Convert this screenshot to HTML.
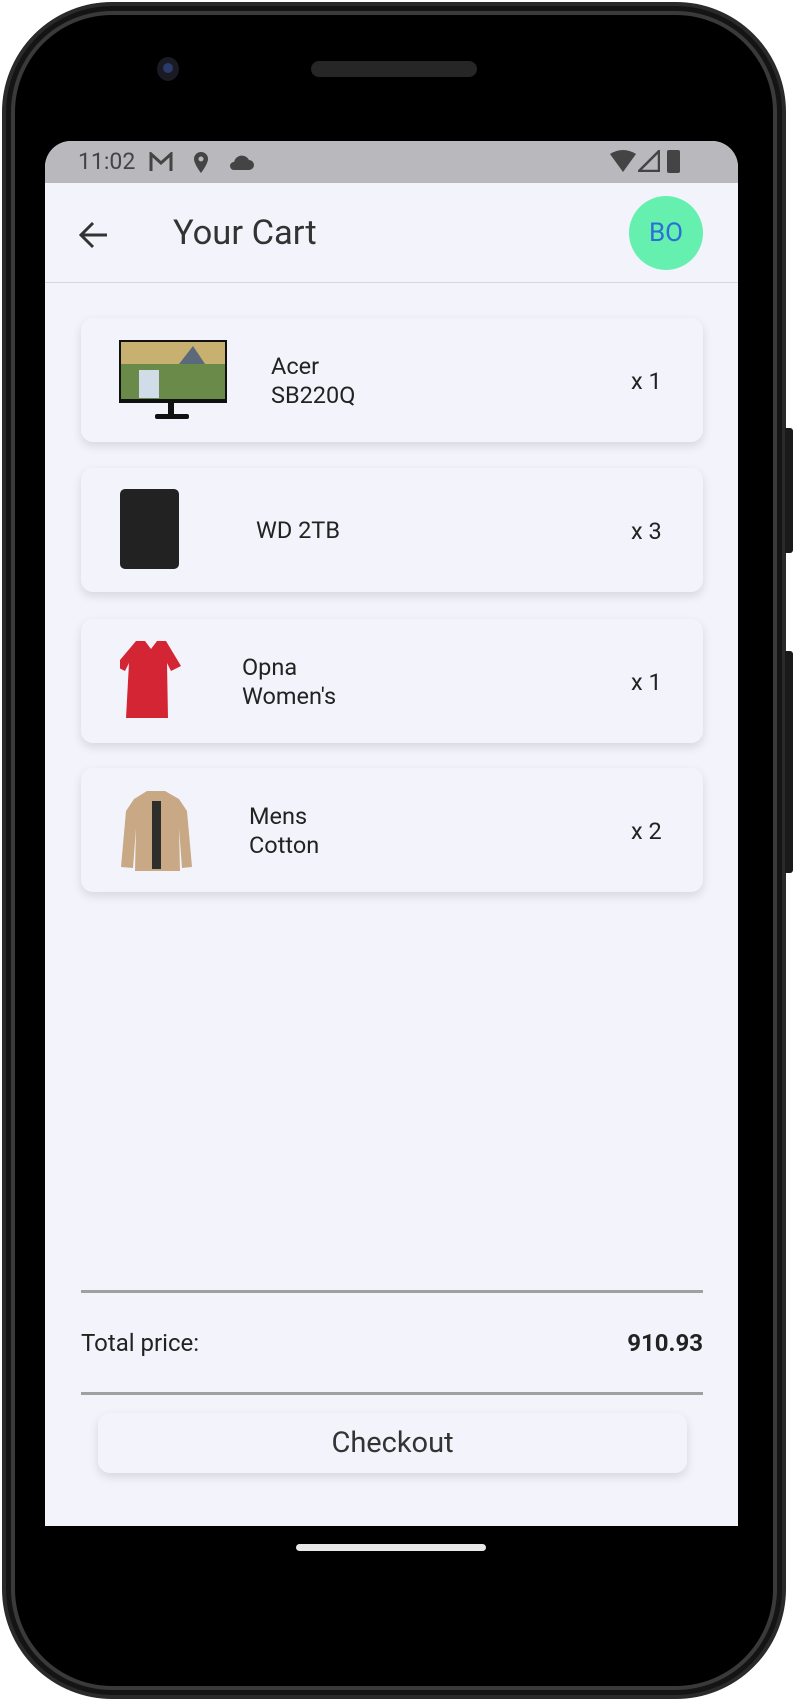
<!DOCTYPE html>
<html><head><meta charset="utf-8"><style>
*{margin:0;padding:0;box-sizing:border-box}
body{width:793px;height:1700px;background:#fff;position:relative;overflow:hidden;font-family:"Roboto","Liberation Sans",sans-serif;color:#222}
.phone{position:absolute;left:2px;top:2px;width:784px;height:1697px;background:#000;border-radius:110px;border:4px solid #2a2a2a;box-shadow:inset 0 0 0 5px #141414, inset 0 0 0 9px #3a3a3a, inset 0 0 0 14px #000}
.btn{position:absolute;left:785px;width:8px;background:#1a1a1a;border-radius:0 3px 3px 0}
.screen{position:absolute;left:45px;top:141px;width:693px;height:1385px;background:#f3f4fb;border-radius:26px 26px 0 0;overflow:hidden}
.status{position:absolute;left:0;top:0;width:100%;height:42px;background:#b8b8bd}
.abs{position:absolute}
.card{position:absolute;left:36px;width:622px;height:124px;background:#f3f4fb;border-radius:12px;box-shadow:0 4px 10px rgba(0,0,0,.12)}
.name{position:absolute;font-size:23.5px;line-height:29px;color:#222}
.qty{position:absolute;left:550px;font-size:23.5px;top:49px}
.line{position:absolute;left:36px;width:622px;height:3px;background:#a0a0a0}
</style></head><body>
<div class="phone"></div>
<div class="btn" style="top:428px;height:125px"></div>
<div class="btn" style="top:651px;height:222px"></div>
<div class="abs" style="left:157px;top:57px;width:22px;height:24px;border-radius:50%;background:#1a1a22"><div style="margin:6px auto;width:10px;height:10px;border-radius:50%;background:#2a3a6a"></div></div>
<div class="abs" style="left:311px;top:61px;width:166px;height:16px;border-radius:8px;background:#262626"></div>
<div class="screen">
 <div class="status">
  <div class="abs" style="left:33px;top:7px;font-size:23px;color:#444">11:02</div>
  <svg class="abs" style="left:104px;top:11px" width="24" height="20" viewBox="0 0 24 20"><path d="M2 19V2l10 9 10-9v17" fill="none" stroke="#444" stroke-width="3"/></svg>
  <svg class="abs" style="left:147px;top:10px" width="18" height="24" viewBox="0 0 18 24"><path d="M9 1a7 7 0 0 0-7 7c0 5 7 14 7 14s7-9 7-14a7 7 0 0 0-7-7zm0 9.5a2.5 2.5 0 1 1 0-5 2.5 2.5 0 0 1 0 5z" fill="#444"/></svg>
  <svg class="abs" style="left:183px;top:13px" width="26" height="16" viewBox="0 0 26 16"><path d="M6 16h15a5 5 0 0 0 0-10 8 8 0 0 0-15 2 4 4 0 0 0 0 8z" fill="#444"/></svg>
  <svg class="abs" style="left:565px;top:9px" width="26" height="22" viewBox="0 0 26 22"><path d="M0 4Q13-4 26 4L13 22z" fill="#444"/></svg>
  <svg class="abs" style="left:593px;top:9px" width="22" height="22"><path d="M21 1V21H1z" fill="none" stroke="#444" stroke-width="2.5"/></svg>
  <div class="abs" style="left:622px;top:9px;width:13px;height:23px;background:#444;border-radius:2px"></div>
 </div>
 <svg class="abs" style="left:33px;top:78px" width="32" height="32" viewBox="0 0 32 32"><path d="M29 16H4M15 4L3 16l12 12" fill="none" stroke="#333" stroke-width="3"/></svg>
 <div class="abs" style="left:128px;top:72px;font-size:34.5px;color:#333">Your Cart</div>
 <div class="abs" style="left:584px;top:55px;width:74px;height:74px;border-radius:50%;background:#66f0b0;color:#2a6fd6;font-size:26px;text-align:center;line-height:74px">BO</div>
 <div class="abs" style="left:0;top:141px;width:100%;height:1px;background:#d6d6dc"></div>

 <div class="card" style="top:177px">
  <svg class="abs" style="left:38px;top:22px" width="108" height="82" viewBox="0 0 108 82"><rect x="0" y="0" width="108" height="63" fill="#111"/><rect x="2" y="2" width="104" height="57" fill="#6a8a4a"/><rect x="2" y="2" width="104" height="22" fill="#c8b070"/><path d="M60 24l14-18 12 18z" fill="#5a6a7a"/><rect x="20" y="30" width="20" height="28" fill="#d0dce8"/><rect x="49" y="63" width="6" height="12" fill="#111"/><rect x="36" y="74" width="34" height="5" rx="2" fill="#111"/></svg>
  <div class="name" style="left:190px;top:34px">Acer<br>SB220Q</div>
  <div class="qty">x 1</div>
 </div>
 <div class="card" style="top:327px">
  <div class="abs" style="left:39px;top:21px;width:59px;height:80px;background:#222;border-radius:5px"></div>
  <div class="name" style="left:175px;top:48px">WD 2TB</div>
  <div class="qty">x 3</div>
 </div>
 <div class="card" style="top:478px">
  <svg class="abs" style="left:39px;top:20px" width="62" height="82" viewBox="0 0 62 82"><path d="M16 2l9 0 6 8 6-8 9 0 15 25-10 5-4-8 1 55-42 0 3-55-4 8-10-5z" fill="#d42535"/></svg>
  <div class="name" style="left:161px;top:34px">Opna<br>Women's</div>
  <div class="qty">x 1</div>
 </div>
 <div class="card" style="top:627px">
  <svg class="abs" style="left:38px;top:21px" width="75" height="82" viewBox="0 0 75 82"><path d="M28 2h18l14 8 8 12 5 56-10 1-3-40 1 43H16l1-43-3 40-12-1 5-56 8-12z" fill="#c9a985"/><path d="M33 12h9v68h-9z" fill="#2e2e2a"/></svg>
  <div class="name" style="left:168px;top:34px">Mens<br>Cotton</div>
  <div class="qty">x 2</div>
 </div>

 <div class="line" style="top:1149px"></div>
 <div class="abs" style="left:36px;top:1188px;font-size:24px;color:#222">Total price:</div>
 <div class="abs" style="left:480px;width:178px;text-align:right;top:1188px;font-size:24px;font-weight:bold;color:#222">910.93</div>
 <div class="line" style="top:1251px"></div>
 <div class="abs" style="left:53px;top:1272px;width:589px;height:60px;border-radius:12px;background:#f3f4fb;box-shadow:0 4px 10px rgba(0,0,0,.12);text-align:center;line-height:60px;font-size:29px;color:#333">Checkout</div>
</div>
<div class="abs" style="left:296px;top:1544px;width:190px;height:7px;border-radius:4px;background:#e8e8e8"></div>
</body></html>
